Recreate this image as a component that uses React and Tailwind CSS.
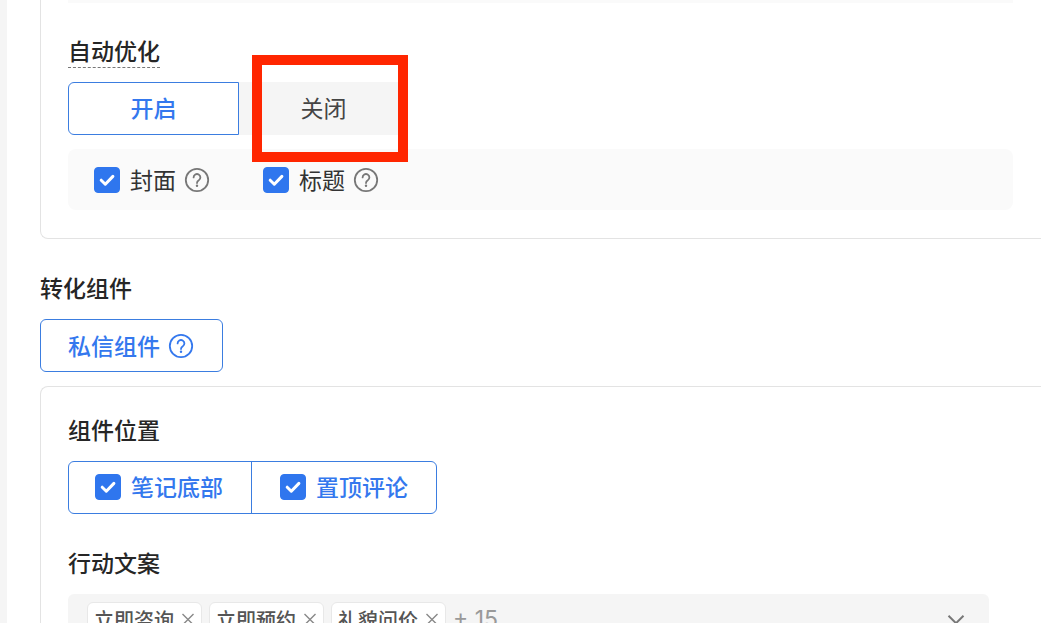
import { useState } from 'react'

const initialTags = ['立即咨询', '立即预约', '礼貌问价']

function HelpIcon({ className }) {
  return (
    <svg viewBox="0 0 26 26" fill="none" stroke="currentColor" strokeWidth="1.8" className={`h-[26px] w-[26px] shrink-0 ${className}`} aria-hidden="true">
      <circle cx="13" cy="13" r="11.2" />
      <path d="M9.6 10.4a3.4 3.4 0 1 1 5.2 2.9c-1.2.7-1.8 1.3-1.8 2.7" strokeLinecap="round" />
      <circle cx="13" cy="18.7" r="1.2" fill="currentColor" stroke="none" />
    </svg>
  )
}

function Checkbox({ label, className = '', children }) {
  return (
    <label className={`flex items-center ${className}`}>
      <span className="mr-2.5 grid h-[26px] w-[26px] shrink-0">
        <input
          type="checkbox"
          defaultChecked
          className="peer col-start-1 row-start-1 h-full w-full appearance-none rounded border border-gray-300 bg-white checked:border-[#2f76ee] checked:bg-[#2f76ee]"
        />
        <svg viewBox="0 0 26 26" fill="none" className="pointer-events-none invisible col-start-1 row-start-1 h-full w-full peer-checked:visible" aria-hidden="true">
          <path d="M7.2 13.2l4.1 4 7.6-7.8" stroke="#fff" strokeWidth="3" strokeLinecap="round" strokeLinejoin="round" />
        </svg>
      </span>
      <span className="pb-0.5">{label}</span>
      {children}
    </label>
  )
}

function Title({ children }) {
  return <h2 className="h-8 text-[23px] leading-7 font-medium text-[#262626]">{children}</h2>
}

export default function App() {
  const [tags, setTags] = useState(initialTags)

  return (
    <div className="flex h-screen overflow-hidden bg-white font-['Noto_Sans_CJK_SC',sans-serif] text-[23px] leading-8 text-[#333]">
      <div className="w-[7px] shrink-0 bg-[#f5f5f5]"></div>

      <main className="min-w-0 flex-1 pl-[33px]">
        <section className="rounded-bl-lg border-b border-l border-[#e3e3e3] pr-7 pb-7 pl-[27px]">
          <div className="h-[3px] bg-[#fafafa]"></div>
          <h2 className="mt-[33px] h-8 w-fit border-b border-dashed border-[#777] text-[23px] leading-7 font-medium text-[#262626]">自动优化</h2>

          <div className="relative mt-3.5 flex w-fit">
            <button type="button" className="h-[53px] w-[171px] rounded-l-md border border-[#3b7de0] bg-white pb-1 font-medium text-[#3478ee]">开启</button>
            <button type="button" className="h-[53px] w-[169px] bg-[#f5f5f5] pb-1 text-[#444]">关闭</button>
            <div className="pointer-events-none absolute -top-[27px] right-0 h-[107px] w-[156px] border-10 border-[#ff2600]"></div>
          </div>

          <div className="mt-3.5 flex h-[61px] items-center rounded-lg bg-[#fafafa] pl-[26px]">
            <Checkbox label="封面" className="mr-[53px]">
              <HelpIcon className="ml-2 text-[#777]" />
            </Checkbox>
            <Checkbox label="标题">
              <HelpIcon className="ml-2 text-[#777]" />
            </Checkbox>
          </div>
        </section>

        <section className="mt-[34px]">
          <Title>转化组件</Title>
          <button type="button" className="mt-3.5 flex h-[53px] items-center rounded-md border border-[#3b7de0] pr-7 pl-[27px] font-medium text-[#3478ee]">
            <span className="pb-0.5">私信组件</span>
            <HelpIcon className="ml-2" />
          </button>

          <div className="mt-3.5 rounded-tl-lg border-t border-l border-[#e3e3e3] pt-7 pr-[52px] pl-[27px]">
            <Title>组件位置</Title>
            <div className="mt-3.5 flex h-[53px] w-fit divide-x divide-[#3b7de0] rounded-md border border-[#3b7de0] font-medium text-[#3478ee]">
              <Checkbox label="笔记底部" className="pr-7 pb-0.5 pl-[26px]" />
              <Checkbox label="置顶评论" className="pr-7 pb-0.5 pl-7" />
            </div>

            <div className="mt-[34px]">
              <Title>行动文案</Title>
            </div>
            <div className="mt-3.5 flex h-[53px] items-center justify-between rounded-md bg-[#f5f5f5] pr-6 pb-0.5 pl-[19px] text-xl">
              <div className="flex items-center gap-[7px]">
                {tags.map(tag => (
                  <span key={tag} className="flex h-9 items-center gap-[7px] rounded-md border border-[#e8e8e8] bg-white px-1.5 font-medium text-[#555]">
                    {tag}
                    <button type="button" aria-label={`移除${tag}`} onClick={() => setTags(tags.filter(t => t !== tag))} className="text-[#888]">
                      <svg viewBox="0 0 14 14" className="h-3.5 w-3.5" fill="none" stroke="currentColor" strokeWidth="1.4" aria-hidden="true">
                        <path d="M1.5 1l11 11M12.5 1l-11 11" />
                      </svg>
                    </button>
                  </span>
                ))}
                <span className="font-['Inter','Noto_Sans_CJK_SC',sans-serif] text-[23px] text-[#999]">+ 15</span>
              </div>
              <button type="button" aria-label="展开行动文案" aria-haspopup="listbox" className="text-[#777]">
                <svg viewBox="0 0 18 18" className="h-[18px] w-[18px]" fill="none" stroke="currentColor" strokeWidth="2" aria-hidden="true">
                  <path d="M1.5 4.8L9 12.2l7.5-7.4" />
                </svg>
              </button>
            </div>
          </div>
        </section>
      </main>
    </div>
  )
}
